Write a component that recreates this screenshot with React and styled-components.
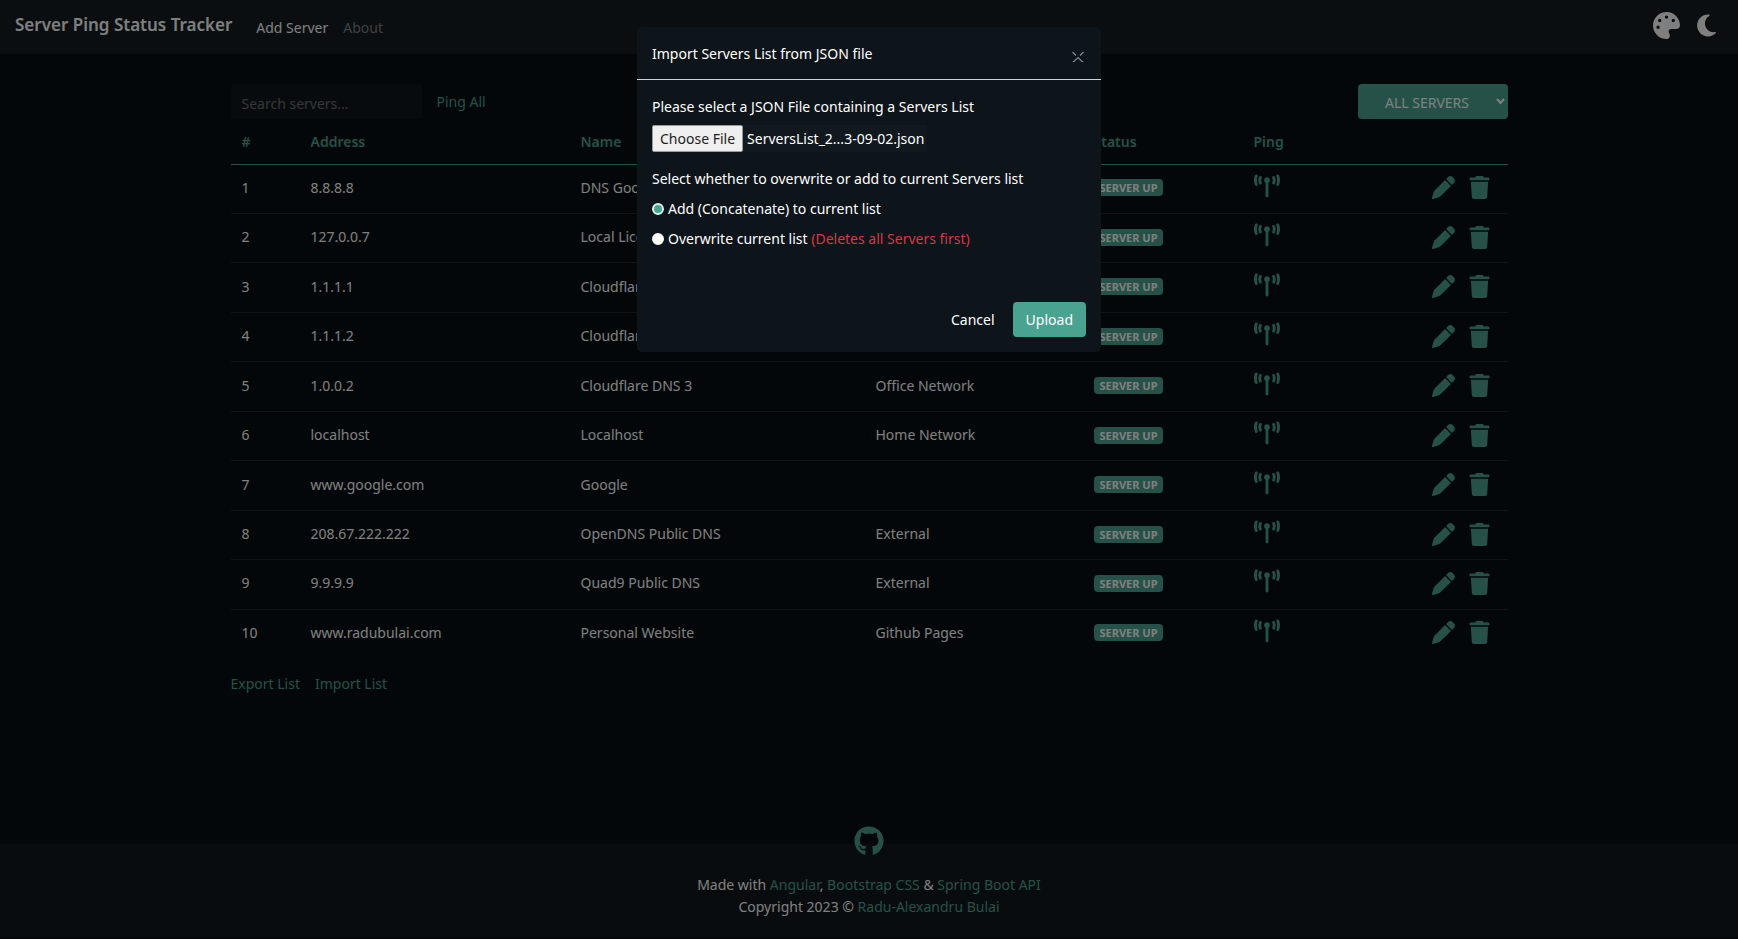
import React, { useState } from "react";
import styled, { createGlobalStyle } from "styled-components";
import { FaPalette, FaMoon, FaTowerBroadcast, FaPen, FaTrash, FaGithub } from "react-icons/fa6";

const accent = "#4aa390";

const GlobalStyle = createGlobalStyle`
  *, *::before, *::after { box-sizing: border-box; }
  body {
    margin: 0;
    background: #060e12;
    color: #fff;
    font: 14px/22px "Segoe UI", "Noto Sans", "Open Sans", sans-serif;
  }
  button, input, select { font: inherit; color: inherit; }
  button { cursor: pointer; }
`;

const Page = styled.div`
  min-height: 100vh;
  display: flex;
  flex-direction: column;
  padding-bottom: 2px;
`;

const Navbar = styled.nav`
  display: flex;
  align-items: center;
  height: 54px;
  padding: 0 15px;
  background: #141c22;
`;

const Brand = styled.a`
  margin-right: 24px;
  padding-bottom: 5px;
  color: #fff;
  font-size: 17px;
  font-weight: 600;
  text-decoration: none;
`;

const NavLink = styled.a`
  margin-right: 15px;
  padding-top: 2px;
  color: ${(p) => (p.$muted ? "#7d8184" : "#fff")};
  text-decoration: none;
`;

const NavTools = styled.div`
  display: flex;
  align-items: center;
  gap: 14px;
  margin-left: auto;
  padding: 0 4px 4px 0;
`;

const IconButton = styled.button`
  display: inline-flex;
  padding: 0;
  border: 0;
  background: none;
  color: ${(p) => p.$color || accent};
  font-size: ${(p) => p.$size || 23}px;
`;

const Main = styled.main`
  flex: 1;
  width: 100%;
  max-width: 1307px;
  margin: 0 auto;
  padding: 30px 15px 0;
`;

const Toolbar = styled.div`
  display: flex;
  align-items: center;
`;

const Search = styled.input`
  width: 191px;
  height: 35px;
  margin-right: 15px;
  padding: 3px 11px 0;
  border: 0;
  border-radius: 4px;
  background: #11171b;
  &::placeholder { color: #6b6f72; opacity: 1; }
`;

const TextButton = styled.button`
  padding: 0;
  border: 0;
  background: none;
  color: ${(p) => (p.$plain ? "#fff" : accent)};
`;

const Filter = styled.div`
  position: relative;
  width: 150px;
  margin-left: auto;
  svg { position: absolute; right: 3px; top: 14px; pointer-events: none; }
`;

const FilterSelect = styled.select`
  appearance: none;
  width: 100%;
  height: 35px;
  padding: 2px 24px 0 13px;
  border: 0;
  border-radius: 4px;
  background: ${accent};
  text-align: center;
  text-align-last: center;
`;

const Table = styled.table`
  width: 100%;
  height: 539px;
  table-layout: fixed;
  border-collapse: collapse;
`;

const Col = styled.col`
  width: ${(p) => p.$w}px;
`;

const HeadCell = styled.th`
  height: 45px;
  padding: 2px 11px 0;
  border-bottom: 1px solid ${accent};
  color: ${accent};
  font-weight: 600;
  text-align: left;
`;

const Row = styled.tr`
  border-bottom: 1px solid #20272b;
  &:last-child { border-bottom: 0; }
`;

const Cell = styled.td`
  padding: 0 11px 2px;
  white-space: nowrap;
`;

const Badge = styled.span`
  display: block;
  width: fit-content;
  padding: 0 6px;
  border-radius: 4px;
  background: ${accent};
  font-size: 11px;
  font-weight: 700;
  line-height: 17px;
`;

const PingCell = styled(Cell)`
  padding-bottom: 6px;
  line-height: 0;
`;

const Actions = styled.div`
  display: flex;
  justify-content: flex-end;
  gap: 13px;
  padding-right: 6px;
`;

const ListActions = styled.div`
  display: flex;
  gap: 15px;
  margin-top: 15px;
`;

const Footer = styled.footer`
  display: flex;
  flex-direction: column;
  align-items: center;
  height: 93px;
  background: #12181c;
  p { margin: 0; }
  a { color: ${accent}; text-decoration: none; }
`;

const GithubLink = styled.a`
  display: flex;
  height: 30px;
  margin: -18px 0 18px;
  font-size: 30px;
`;

const Backdrop = styled.div`
  position: fixed;
  inset: 0;
  display: flex;
  align-items: flex-start;
  justify-content: center;
  padding-top: 27px;
  background: rgba(0, 0, 0, 0.5);
`;

const Dialog = styled.form`
  width: 464px;
  max-width: 100%;
  border-radius: 5px;
  background: #0d141a;
`;

const DialogHeader = styled.header`
  display: flex;
  align-items: center;
  justify-content: space-between;
  height: 53px;
  padding: 1px 15px 0;
  border-bottom: 1px solid #d0d3d5;
`;

const DialogTitle = styled.h2`
  margin: 0;
  font-size: 14px;
  font-weight: 400;
`;

const CloseButton = styled(IconButton)`
  margin: 7px 2px 0 0;
`;

const DialogBody = styled.div`
  padding: 16px 15px;
`;

const FilePicker = styled.div`
  display: inline-flex;
  align-items: center;
  gap: 4px;
  margin: 7px 0 16px;
  padding-right: 3px;
  background: #11191f;
`;

const FileInput = styled.input`
  position: absolute;
  width: 1px;
  height: 1px;
  opacity: 0;
`;

const FileButton = styled.label`
  height: 27px;
  padding: 0 7px;
  border: 1px solid #9a9a9a;
  border-radius: 2px;
  background: #efefef;
  color: #222;
  line-height: 26px;
  cursor: pointer;
`;

const Choice = styled.label`
  display: flex;
  align-items: center;
  gap: 4px;
  margin-top: 8px;
`;

const Radio = styled.input`
  appearance: none;
  width: 12px;
  height: 12px;
  margin: 0;
  border: 2px solid #fff;
  border-radius: 50%;
  background: #fff;
  &:checked { background: ${accent}; border-color: #d9f3ec; }
`;

const Danger = styled.span`
  color: #dc3545;
`;

const DialogFooter = styled.footer`
  display: flex;
  align-items: center;
  justify-content: flex-end;
  gap: 18px;
  padding: 36px 15px 15px;
`;

const PrimaryButton = styled.button`
  height: 35px;
  padding: 0 13px;
  border: 0;
  border-radius: 4px;
  background: ${accent};
`;

const columns = [
  ["#", 69],
  ["Address", 270],
  ["Name", 295],
  ["Location", 218],
  ["Status", 160],
  ["Ping", 100],
];

const servers = [
  ["8.8.8.8", "DNS Google", "External"],
  ["127.0.0.7", "Local License", "Home Network"],
  ["1.1.1.1", "Cloudflare DNS", "Office Network"],
  ["1.1.1.2", "Cloudflare DNS 2", "Office Network"],
  ["1.0.0.2", "Cloudflare DNS 3", "Office Network"],
  ["localhost", "Localhost", "Home Network"],
  ["www.google.com", "Google", ""],
  ["208.67.222.222", "OpenDNS Public DNS", "External"],
  ["9.9.9.9", "Quad9 Public DNS", "External"],
  ["www.radubulai.com", "Personal Website", "Github Pages"],
];

function ServerRow({ index, server: [address, name, location] }) {
  return (
    <Row>
      <Cell>{index}</Cell>
      <Cell>{address}</Cell>
      <Cell>{name}</Cell>
      <Cell>{location}</Cell>
      <Cell><Badge>SERVER UP</Badge></Cell>
      <PingCell>
        <IconButton type="button" aria-label={`Ping ${name}`} $size={26}><FaTowerBroadcast /></IconButton>
      </PingCell>
      <Cell>
        <Actions>
          <IconButton type="button" aria-label={`Edit ${name}`}><FaPen /></IconButton>
          <IconButton type="button" aria-label={`Delete ${name}`}><FaTrash /></IconButton>
        </Actions>
      </Cell>
    </Row>
  );
}

function ImportDialog() {
  const [mode, setMode] = useState("add");
  const [fileName, setFileName] = useState("ServersList_2...3-09-02.json");
  return (
    <Backdrop>
      <Dialog role="dialog" aria-modal="true" aria-labelledby="import-title" onSubmit={(e) => e.preventDefault()}>
        <DialogHeader>
          <DialogTitle id="import-title">Import Servers List from JSON file</DialogTitle>
          <CloseButton type="button" aria-label="Close" $color="#85898c">
            <svg width="12" height="12" viewBox="0 0 12 12" fill="none" stroke="currentColor" strokeWidth="1.2">
              <path d="M.5 1l3.5 3.5M11.5 1L8 4.500M.8 10.500h1.200l4-4 4 4h1.200" />
            </svg>
          </CloseButton>
        </DialogHeader>
        <DialogBody>
          <div>Please select a JSON File containing a Servers List</div>
          <FilePicker>
            <FileInput
              id="servers-file"
              type="file"
              accept=".json"
              onChange={(e) => e.target.files[0] && setFileName(e.target.files[0].name)}
            />
            <FileButton htmlFor="servers-file">Choose File</FileButton>
            <span>{fileName}</span>
          </FilePicker>
          <div>Select whether to overwrite or add to current Servers list</div>
          <Choice>
            <Radio type="radio" name="mode" checked={mode === "add"} onChange={() => setMode("add")} />
            <span>Add (Concatenate) to current list</span>
          </Choice>
          <Choice>
            <Radio type="radio" name="mode" checked={mode === "overwrite"} onChange={() => setMode("overwrite")} />
            <span>Overwrite current list <Danger>(Deletes all Servers first)</Danger></span>
          </Choice>
        </DialogBody>
        <DialogFooter>
          <TextButton type="button" $plain>Cancel</TextButton>
          <PrimaryButton type="submit">Upload</PrimaryButton>
        </DialogFooter>
      </Dialog>
    </Backdrop>
  );
}

export default function App() {
  return (
    <>
      <GlobalStyle />
      <Page>
        <Navbar>
          <Brand href="#">Server Ping Status Tracker</Brand>
          <NavLink href="#add">Add Server</NavLink>
          <NavLink href="#about" $muted>About</NavLink>
          <NavTools>
            <IconButton type="button" aria-label="Change palette" $color="#fff" $size={27}><FaPalette /></IconButton>
            <IconButton type="button" aria-label="Toggle dark mode" $color="#fff" $size={25}><FaMoon /></IconButton>
          </NavTools>
        </Navbar>
        <Main>
          <Toolbar>
            <Search type="search" placeholder="Search servers..." aria-label="Search servers" />
            <TextButton type="button">Ping All</TextButton>
            <Filter>
              <FilterSelect aria-label="Filter servers by status" defaultValue="all">
                <option value="all">ALL SERVERS</option>
                <option value="up">SERVER UP</option>
                <option value="down">SERVER DOWN</option>
              </FilterSelect>
              <svg width="9" height="7" viewBox="0 0 9 7" fill="none" stroke="#fff" strokeWidth="2">
                <path d="M1 1l3.5 4L8 1" />
              </svg>
            </Filter>
          </Toolbar>
          <Table>
            <colgroup>
              {columns.map(([label, width]) => <Col key={label} $w={width} />)}
              <Col $w={165} />
            </colgroup>
            <thead>
              <tr>
                {columns.map(([label]) => <HeadCell key={label} scope="col">{label}</HeadCell>)}
                <HeadCell as="td" />
              </tr>
            </thead>
            <tbody>
              {servers.map((s, i) => <ServerRow key={s[0]} index={i + 1} server={s} />)}
            </tbody>
          </Table>
          <ListActions>
            <TextButton type="button">Export List</TextButton>
            <TextButton type="button">Import List</TextButton>
          </ListActions>
        </Main>
        <Footer>
          <GithubLink href="#github" aria-label="GitHub"><FaGithub /></GithubLink>
          <p>Made with <a href="#angular">Angular</a>, <a href="#bootstrap">Bootstrap CSS</a> &amp; <a href="#spring">Spring Boot API</a></p>
          <p>Copyright 2023 © <a href="#author">Radu-Alexandru Bulai</a></p>
        </Footer>
      </Page>
      <ImportDialog />
    </>
  );
}
